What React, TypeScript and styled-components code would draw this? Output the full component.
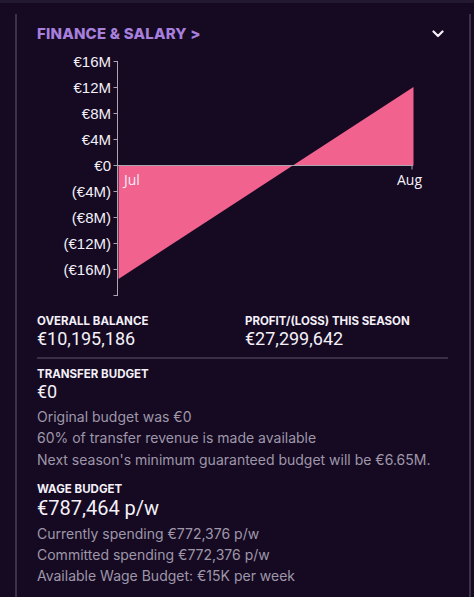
import React from "react";
import styled, { createGlobalStyle } from "styled-components";

const Global = createGlobalStyle`
  html, body { margin: 0; padding: 0; background: #150a22; }
  body { font-family: Inter, Roboto, "Noto Sans", sans-serif; color: #f1eef6; }
`;

const TopStrip = styled.div`
  height: 3px;
  background: #22182f;
`;

const Panel = styled.section`
  margin: 11px 3px 0 15px;
  border-left: 2px solid #3b3247;
  border-right: 2px solid #3b3247;
  padding: 10px 21px 20px 20px;
  min-height: 560px;
  box-sizing: border-box;
`;

const Header = styled.div`
  display: flex;
  align-items: center;
  justify-content: space-between;
  height: 20px;
`;

const Title = styled.h2`
  margin: 0;
  font-family: Inter, Roboto, sans-serif;
  font-size: 15px;
  font-weight: 800;
  letter-spacing: 0.2px;
  color: #a77fdc;
  line-height: 20px;
`;

const Toggle = styled.span`
  display: flex;
  margin-right: 4px;
`;

const Chart = styled.svg`
  display: block;
  margin-top: 8px;
`;

const Row = styled.div`
  display: grid;
  grid-template-columns: 208px 1fr;
  padding-bottom: 7px;
  border-bottom: 2px solid #3a2f49;
`;

const Stat = styled.div`
  display: flex;
  flex-direction: column;
`;

const Label = styled.div`
  font-family: Inter, Roboto, sans-serif;
  font-size: 11.5px;
  font-weight: 700;
  line-height: 14px;
  color: #f4f0f8;
`;

const Value = styled.div<{ $big?: boolean }>`
  font-family: Roboto, Inter, sans-serif;
  font-size: ${(p) => (p.$big ? "20px" : "18px")};
  line-height: ${(p) => (p.$big ? "24px" : "22px")};
  color: #f4f0f8;
`;

const Block = styled.div<{ $gap?: number }>`
  margin-top: ${(p) => p.$gap ?? 0}px;
`;

const Notes = styled.div<{ $gap?: number }>`
  margin-top: ${(p) => p.$gap ?? 3}px;
`;

const Note = styled.div`
  font-family: Inter, Roboto, sans-serif;
  font-size: 14px;
  line-height: 21.3px;
  color: #9f97a9;
`;

const ticks = ["€16M", "€12M", "€8M", "€4M", "€0", "(€4M)", "(€8M)", "(€12M)", "(€16M)", ""];

function FinanceChart() {
  // svg origin at page (37, 52)
  const ox = 37;
  const oy = 52;
  const X = (x: number) => x - ox;
  const Y = (y: number) => y - oy;
  const axisX = X(117.5);
  const zeroY = Y(165.5);
  return (
    <Chart width={411} height={252} viewBox="0 0 411 252">
      <polygon
        points={`${X(118.5)},${zeroY} ${X(118.5)},${Y(279)} ${X(413.5)},${Y(87)} ${X(413.5)},${zeroY}`}
        fill="#f2628f"
      />
      <line x1={axisX} y1={Y(61)} x2={axisX} y2={Y(296)} stroke="#aaa6b0" strokeWidth={1} />
      {ticks.map((t, i) => {
        const y = Y(61.5 + 26 * i);
        return (
          <g key={i}>
            <line x1={axisX - 4} y1={y} x2={axisX} y2={y} stroke="#aaa6b0" strokeWidth={1} />
            {t && (
              <text
                x={X(111)}
                y={y + 5.5}
                textAnchor="end"
                fontFamily='"Liberation Sans", Arial, sans-serif'
                fontSize={15}
                fill="#f4f0f8"
              >
                {t}
              </text>
            )}
          </g>
        );
      })}
      <line x1={axisX} y1={zeroY} x2={X(413)} y2={zeroY} stroke="#aaa6b0" strokeWidth={1} />
      <line x1={X(412)} y1={zeroY} x2={X(412)} y2={zeroY + 4} stroke="#aaa6b0" strokeWidth={1} />
      <text x={X(124)} y={Y(185)} fontFamily='"Open Sans", "Noto Sans", sans-serif' fontSize={14} fill="#f4f0f8">
        Jul
      </text>
      <text x={X(397)} y={Y(185)} fontFamily='"Open Sans", "Noto Sans", sans-serif' fontSize={14} fill="#f4f0f8">
        Aug
      </text>
    </Chart>
  );
}

export default function App() {
  return (
    <>
      <Global />
      <TopStrip />
      <Panel>
        <Header>
          <Title>FINANCE &amp; SALARY &gt;</Title>
          <Toggle>
            <svg width="12" height="8" viewBox="0 0 12 8">
              <path d="M1.5 1.5 L6 6 L10.5 1.5" fill="none" stroke="#f4f0f8" strokeWidth="2.2" strokeLinecap="round" strokeLinejoin="round" />
            </svg>
          </Toggle>
        </Header>
        <FinanceChart />
        <Block $gap={10}>
          <Row>
            <Stat>
              <Label>OVERALL BALANCE</Label>
              <Value>€10,195,186</Value>
            </Stat>
            <Stat>
              <Label>PROFIT/(LOSS) THIS SEASON</Label>
              <Value>€27,299,642</Value>
            </Stat>
          </Row>
        </Block>
        <Block $gap={8}>
          <Label>TRANSFER BUDGET</Label>
          <Value>€0</Value>
          <Notes $gap={3}>
            <Note>Original budget was €0</Note>
            <Note>60% of transfer revenue is made available</Note>
            <Note>Next season's minimum guaranteed budget will be €6.65M.</Note>
          </Notes>
        </Block>
        <Block $gap={12}>
          <Label>WAGE BUDGET</Label>
          <Value $big>€787,464 p/w</Value>
          <Notes $gap={3}>
            <Note>Currently spending €772,376 p/w</Note>
            <Note>Committed spending €772,376 p/w</Note>
            <Note>Available Wage Budget: €15K per week</Note>
          </Notes>
        </Block>
      </Panel>
    </>
  );
}
